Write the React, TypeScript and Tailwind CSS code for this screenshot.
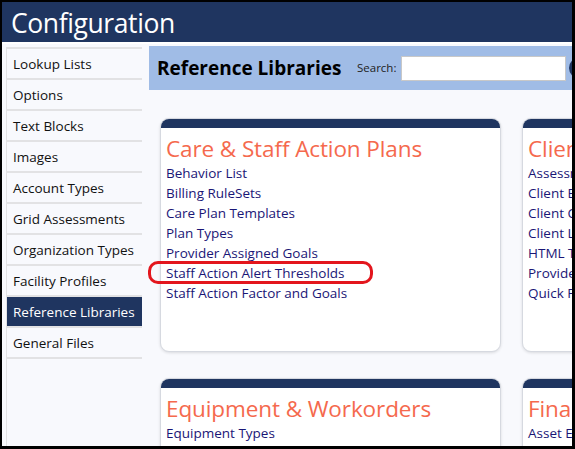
import type { ReactNode } from "react";

const menu = [
  "Lookup Lists",
  "Options",
  "Text Blocks",
  "Images",
  "Account Types",
  "Grid Assessments",
  "Organization Types",
  "Facility Profiles",
  "Reference Libraries",
  "General Files",
];

type Library = {
  title: string;
  links: string[];
};

const libraries: Library[] = [
  {
    title: "Care & Staff Action Plans",
    links: [
      "Behavior List",
      "Billing RuleSets",
      "Care Plan Templates",
      "Plan Types",
      "Provider Assigned Goals",
      "Staff Action Alert Thresholds",
      "Staff Action Factor and Goals",
    ],
  },
  {
    title: "Client Information",
    links: [
      "Assessment Types",
      "Client Events",
      "Client Contacts",
      "Client Lists",
      "HTML Templates",
      "Provider Types",
      "Quick Forms",
    ],
  },
  {
    title: "Equipment & Workorders",
    links: ["Equipment Types"],
  },
  {
    title: "Financial",
    links: ["Asset Entries"],
  },
];

const font = "font-['Open_Sans','Noto_Sans',sans-serif]";

function Card({ lib, children }: { lib: Library; children?: ReactNode }) {
  return (
    <div className="relative h-[234px] rounded-[9px] border border-[#d6d9e0] bg-white shadow-[0_1px_3px_rgba(0,0,0,0.12)]">
      <div className="h-[9px] rounded-t-[8px] bg-[#1f3560]" />
      <div className="px-[5px] pt-[5px]">
        <h2 className="text-[22.5px] leading-[31px] tracking-[-0.1px] text-[#f5694d]">
          {lib.title}
        </h2>
        <ul className="mt-[-1px]">
          {lib.links.map((l) => (
            <li key={l} className="text-[13.5px] leading-[20px] text-[#1a1676]">
              {l}
            </li>
          ))}
        </ul>
      </div>
      {children}
    </div>
  );
}

export default function App() {
  return (
    <div
      className={`h-[449px] w-[575px] overflow-hidden bg-black pb-[3px] pl-[2px] pr-[3px] pt-[2px] ${font}`}
    >
      <div className="flex h-full flex-col overflow-hidden bg-[#f8f9fd]">
        <header className="flex h-[42px] shrink-0 items-center border-b-2 border-white bg-[#1f3560] pl-[9px]">
          <h1 className="mt-[2px] text-[26.5px] leading-none tracking-[-0.4px] text-white">
            Configuration
          </h1>
        </header>

        <div className="flex min-h-0 flex-1">
          <nav className="ml-[4px] mt-[3px] w-[136px] shrink-0 border-l border-t-2 border-[#e2e2e4]">
            {menu.map((m) => (
              <div
                key={m}
                className={`flex h-[31px] items-center border-b-2 border-[#e2e2e4] pl-[6px] pt-[2px] text-[13.5px] ${
                  m === "Reference Libraries"
                    ? "bg-[#1f3560] text-white"
                    : "text-[#111]"
                }`}
              >
                {m}
              </div>
            ))}
          </nav>

          <main className="ml-[7px] mt-[2px] min-w-0 flex-1">
            <div className="flex h-[44px] items-center bg-[#a0bce6] pl-[8px]">
              <h3 className="w-[200px] shrink-0 text-[19px] font-bold text-black">
                Reference Libraries
              </h3>
              <span className="text-[11.5px] text-[#222]">Search:</span>
              <input
                className="ml-[5px] h-[25px] w-[165px] shrink-0 border border-[#c8c8c8] bg-white"
                aria-label="Search"
              />
              <div className="ml-[3px] h-[22px] w-[22px] shrink-0 rounded-full bg-[#1f3560]" />
            </div>

            <div className="ml-[11px] mt-[28px] grid grid-cols-[341px_341px] gap-x-[21px] gap-y-[26px]">
              {libraries.map((lib, i) => (
                <Card key={lib.title} lib={lib}>
                  {i === 0 && (
                    <div className="pointer-events-none absolute left-[-13px] top-[142px] h-[23px] w-[225px] rounded-[10px] border-[3px] border-[#e3161d]" />
                  )}
                </Card>
              ))}
            </div>
          </main>
        </div>
      </div>
    </div>
  );
}
